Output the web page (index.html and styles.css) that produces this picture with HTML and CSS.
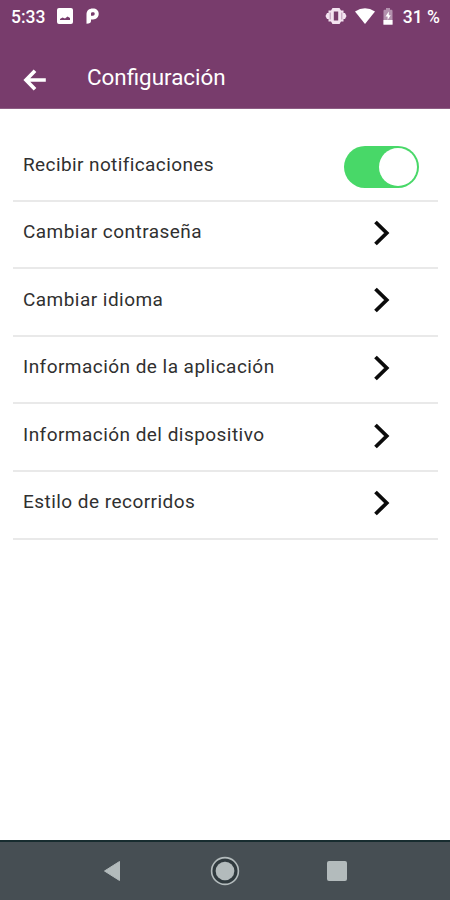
FILE: index.html
```html
<!DOCTYPE html>
<html lang="es">
<head>
<meta charset="utf-8">
<title>Configuración</title>
<link rel="stylesheet" href="styles.css">
</head>
<body>
<div class="screen">
  <header class="header">
    <div class="status">
      <span class="status-text clock">5:33</span>
      <svg class="icon-image" width="16" height="16" viewBox="0 0 16 16"><path fill="#fff" fill-rule="evenodd" d="M2 0H14Q16 0 16 2V14Q16 16 14 16H2Q0 16 0 14V2Q0 0 2 0ZM3 12H13V10L10.5 8.5L8 10.5L5.5 9.5L3 11Z"/></svg>
      <svg class="icon-p" width="13" height="16" viewBox="0 0 13 16"><path fill="#fff" fill-rule="evenodd" d="M.5 6.5C.5 2.5 3 .5 6.8 .5C10.5 .5 12.7 2.5 12.7 5.8C12.7 9.2 10.5 11.4 7 11.4H5V13C5 14.8 3.5 15.8 .5 15.8ZM5 7.8H6.8C8 7.8 8.7 7 8.7 5.8C8.7 4.6 8 4.2 6.8 4.2C5.6 4.2 5 4.6 5 5.8Z"/></svg>
      <span class="spacer"></span>
      <svg class="icon-vibrate" width="22" height="18" viewBox="0 0 22 18"><path fill="#f3e3f0" fill-rule="evenodd" d="M7.5 1H14.5L16 3.5H18.5V6H20L21.5 9L20 12H18.5V14.5H16L14.5 17H7.5L6 14.5H3.5V12H2L.5 9L2 6H3.5V3.5H6ZM8.8 4.5V13.5H13.2V4.5Z"/><path d="M5.2 5.5V12.5M16.8 5.5V12.5" stroke="#b994b2" stroke-width="1"/></svg>
      <svg class="icon-wifi" width="20" height="16" viewBox="0 0 20 16"><path fill="#fff" d="M0 3.6Q10-2.9 20 3.6L10 16Z"/></svg>
      <svg class="icon-battery" width="10" height="17" viewBox="0 0 10 17"><path fill="#b391ae" d="M3 0H7V1.7H8.5Q9.5 1.7 9.5 3V17H.5V3Q.5 1.7 1.5 1.7H3Z"/><path fill="#fff" d="M.5 12H9.5V16.5H.5ZM5.8 3.5L2.5 8.6H4.6V12L7.7 7.2H5.8Z"/></svg>
      <span class="status-text">31 %</span>
    </div>
    <div class="titlebar">
      <svg class="back" width="24" height="24" viewBox="0 0 24 24"><path d="M13 2.7L4 12L13 21.3M4.3 12H23.8" fill="none" stroke="#fff" stroke-width="3.7"/></svg>
      <h1 class="title">Configuración</h1>
    </div>
  </header>
  <main class="list">
    <div class="row"><span class="label l1">Recibir notificaciones</span><span class="switch"><span class="knob"></span></span></div>
    <div class="row"><span class="label">Cambiar contraseña</span><svg class="chevron" width="18" height="26" viewBox="0 0 18 26"><path d="M2.5 2L13.7 13L2.5 24"/></svg></div>
    <div class="row"><span class="label">Cambiar idioma</span><svg class="chevron" width="18" height="26" viewBox="0 0 18 26"><path d="M2.5 2L13.7 13L2.5 24"/></svg></div>
    <div class="row"><span class="label">Información de la aplicación</span><svg class="chevron" width="18" height="26" viewBox="0 0 18 26"><path d="M2.5 2L13.7 13L2.5 24"/></svg></div>
    <div class="row"><span class="label">Información del dispositivo</span><svg class="chevron" width="18" height="26" viewBox="0 0 18 26"><path d="M2.5 2L13.7 13L2.5 24"/></svg></div>
    <div class="row"><span class="label">Estilo de recorridos</span><svg class="chevron" width="18" height="26" viewBox="0 0 18 26"><path d="M2.5 2L13.7 13L2.5 24"/></svg></div>
  </main>
  <nav class="navbar">
    <svg width="30" height="30" viewBox="0 0 30 30"><path fill="#b3bbbc" stroke="#b3bbbc" stroke-width="1" stroke-linejoin="round" d="M6.5 15L21.5 5.5V24.5Z"/></svg>
    <svg width="30" height="30" viewBox="0 0 30 30"><circle cx="15" cy="15" r="11" fill="none" stroke="#303a3e" stroke-width="3"/><circle cx="15" cy="15" r="13.4" fill="none" stroke="#b3bbbc" stroke-width="1.6"/><circle cx="15" cy="15" r="9.3" fill="#b3bbbc"/></svg>
    <svg width="30" height="30" viewBox="0 0 30 30"><rect x="5" y="5" width="20" height="20" rx="2" fill="#b3bbbc"/></svg>
  </nav>
</div>
</body>
</html>
```
FILE: styles.css
```css
* { box-sizing: border-box; }
body { margin: 0; background: #fff; font-family: Roboto, "Liberation Sans", sans-serif; }
svg { display: block; flex: none; }
.screen { width: 450px; height: 900px; display: flex; flex-direction: column; overflow: hidden; }
.header { height: 109px; flex: none; background: #783c6c; border-bottom: 1px solid #8d5d84; color: #fff; }
.status { height: 32px; padding: 0 10px 0 11px; display: flex; align-items: center; }
.status-text { font-size: 17.5px; font-weight: 500; line-height: 20px; white-space: nowrap; padding-top: 1px; }
.clock { width: 46px; }
.icon-p { margin-left: 13px; }
.spacer { flex: 1; }
.icon-wifi { margin-left: 8px; }
.icon-battery { margin: 0 10px 0 8px; }
.titlebar { height: 76px; display: flex; align-items: center; padding: 18px 0 0 22px; }
.back { margin-top: 1px; }
.title { margin: -5px 0 0 41px; font-size: 22.4px; line-height: 28px; font-weight: 400; }
.list { flex: 1; padding: 25px 12px 0 13px; }
.row { height: 67.6px; border-bottom: 2px solid #e9e9e9; display: flex; align-items: center; justify-content: space-between; padding-left: 10px; }
.label { font-size: 19px; line-height: 24px; letter-spacing: .46px; color: #303030; white-space: nowrap; margin-top: -4.6px; }
.l1 { letter-spacing: .4px; margin-top: -4px; }
.switch { width: 75px; height: 42px; margin-right: 19px; border-radius: 21px; background: #48d868; padding: 2px; display: flex; justify-content: flex-end; }
.knob { width: 38px; height: 38px; border-radius: 50%; background: #fff; }
.chevron { margin-right: 47px; margin-top: -3px; }
.chevron path { fill: none; stroke: #0b0b0b; stroke-width: 3.8; }
.navbar { height: 60px; flex: none; background: #464e53; border-top: 2px solid #172c2f; display: flex; justify-content: center; align-items: center; gap: 82px; }
```
